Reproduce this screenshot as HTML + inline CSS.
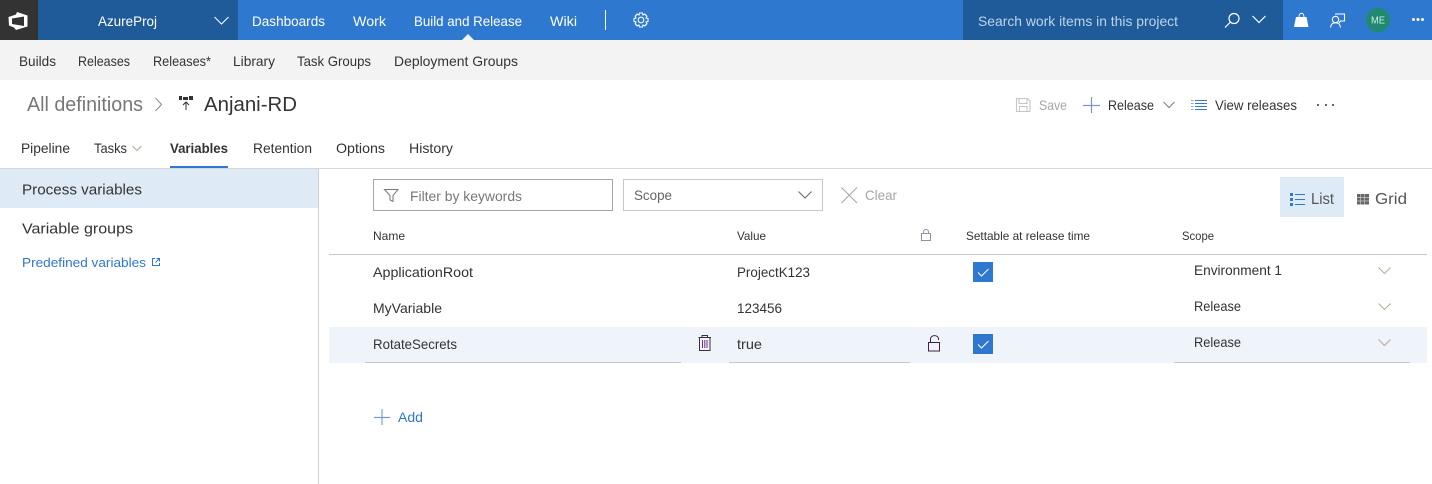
<!DOCTYPE html>
<html lang="en">
<head>
<meta charset="utf-8">
<title>Anjani-RD</title>
<style>
html,body{margin:0;padding:0;width:1432px;height:484px;overflow:hidden;background:#fff}
svg{display:block}
text{font-family:"Liberation Sans",sans-serif;font-size:14px;fill:#333}
.n text{fill:#fff}
.c{fill:none;stroke-width:1}
</style>
</head>
<body>
<svg xmlns="http://www.w3.org/2000/svg" width="1432" height="484" viewBox="0 0 1432 484">
<!-- top nav -->
<rect x="0" y="0" width="1432" height="40" fill="#2e78cf"/>
<rect x="0" y="0" width="38" height="40" fill="#333"/>
<rect x="38" y="0" width="200" height="40" fill="#205b99"/>
<rect x="963" y="0" width="320" height="40" fill="#205b99"/>
<path d="M8.500 17 L16 14.500 L17 12 L27.500 15.500 V26.500 L16 30 L14 27.500 L9 25.500 Z M12 18.500 V24 L24 26 V16.500 Z" fill="#fff" fill-rule="evenodd"/>
<g class="n">
<text x="98" y="26" textLength="59" lengthAdjust="spacingAndGlyphs">AzureProj</text>
<text x="252" y="26" textLength="73" lengthAdjust="spacingAndGlyphs">Dashboards</text>
<text x="353" y="26" textLength="33" lengthAdjust="spacingAndGlyphs">Work</text>
<text x="414" y="26" textLength="108" lengthAdjust="spacingAndGlyphs">Build and Release</text>
<text x="550" y="26" textLength="27" lengthAdjust="spacingAndGlyphs">Wiki</text>
</g>
<path d="M214.500 17 L221.500 24 L228.500 17" class="c" stroke="#fff" stroke-width="1.200"/>
<rect x="605" y="10" width="1" height="20" fill="#fff"/>
<g transform="translate(641 20)" fill="none" stroke="#fff">
<circle r="2.800" stroke-width="1.100"/>
<path d="M-1.500 -7 H1.500 L2 -5 L3.800 -5.900 L5.900 -3.800 L5 -2 L7 -1.500 V1.500 L5 2 L5.900 3.800 L3.800 5.900 L2 5 L1.500 7 H-1.500 L-2 5 L-3.800 5.900 L-5.900 3.800 L-5 2 L-7 1.500 V-1.500 L-5 -2 L-5.900 -3.800 L-3.800 -5.900 L-2 -5 Z" stroke-width="1.100"/>
</g>
<text x="978" y="26" textLength="200" lengthAdjust="spacingAndGlyphs" style="fill:#bcd4ec">Search work items in this project</text>
<g fill="none" stroke="#fff" stroke-width="1.200">
<circle cx="1234" cy="18.500" r="5"/>
<path d="M1230.500 22 L1225 27.500"/>
<path d="M1252.500 16 L1259 22.500 L1265.500 16"/>
</g>
<path d="M1296 17 H1306.500 L1308.500 27 H1294 Z" fill="#fff"/>
<path d="M1299 17 C1299 12 1304 12 1304 17" fill="none" stroke="#fff" stroke-width="1"/>
<g fill="none" stroke="#fff" stroke-width="1.100">
<path d="M1335 14 H1344.500 V21 H1340.500 L1339 23"/>
<circle cx="1335.500" cy="19.500" r="3.200"/>
<path d="M1330.500 27.500 C1331 23.500 1333 22.800 1335.500 22.800 C1338 22.800 1340 23.500 1340.500 27.500"/>
</g>
<circle cx="1378" cy="20" r="12" fill="#1f8a70"/>
<text x="1371" y="23.500" textLength="14" lengthAdjust="spacingAndGlyphs" style="font-size:10px;fill:#cfeee6">ME</text>
<g fill="#fff"><circle cx="1413.500" cy="19.500" r="1.500"/><circle cx="1418" cy="19.500" r="1.500"/><circle cx="1422.500" cy="19.500" r="1.500"/></g>

<!-- sub nav -->
<rect x="0" y="40" width="1432" height="40" fill="#f3f3f3"/>
<path d="M462 40 L468 34 L474 40 Z" fill="#f3f3f3"/>
<text x="19" y="66" textLength="37" lengthAdjust="spacingAndGlyphs">Builds</text>
<text x="78" y="66" textLength="52" lengthAdjust="spacingAndGlyphs">Releases</text>
<text x="153" y="66" textLength="58" lengthAdjust="spacingAndGlyphs">Releases*</text>
<text x="233" y="66" textLength="42" lengthAdjust="spacingAndGlyphs">Library</text>
<text x="297" y="66" textLength="74" lengthAdjust="spacingAndGlyphs">Task Groups</text>
<text x="394" y="66" textLength="124" lengthAdjust="spacingAndGlyphs">Deployment Groups</text>

<!-- title -->
<text x="27" y="111" textLength="116" lengthAdjust="spacingAndGlyphs" style="font-size:20px;fill:#777">All definitions</text>
<path d="M155.500 98 L161.500 104.500 L155.500 111" class="c" stroke="#8a8a8a" stroke-width="1.100"/>
<g fill="#333"><rect x="179" y="96" width="3" height="4"/><rect x="183" y="97" width="5" height="3"/><rect x="189" y="96" width="4" height="4"/></g>
<path d="M186 110 V102.500 M183 105 L186 102 L189 105" class="c" stroke="#333"/>
<text x="204" y="111" textLength="93" lengthAdjust="spacingAndGlyphs" style="font-size:20px;fill:#333">Anjani-RD</text>

<!-- actions -->
<g fill="none" stroke="#c4c8c4" stroke-width="1.100">
<path d="M1016.500 98.500 H1027.500 L1030 101 V111.500 H1016.500 Z"/>
<path d="M1019 98.500 V103.500 H1027 V98.500 M1019.500 111.500 V106.500 H1027 V111.500"/>
</g>
<text x="1039" y="110" textLength="28" lengthAdjust="spacingAndGlyphs" style="fill:#a6a6a6">Save</text>
<path d="M1091.500 97 V113" stroke="#7a96cc" stroke-width="1.200"/>
<path d="M1083 105.500 H1100" stroke="#7a96cc" stroke-width="1.200"/>
<text x="1108" y="110" textLength="46" lengthAdjust="spacingAndGlyphs">Release</text>
<path d="M1163.500 102 L1169 107.500 L1174.500 102" class="c" stroke="#7d7d7d"/>
<g stroke="#2e78cf"><path d="M1195 100.500 H1207 M1195 103.500 H1207 M1195 106.500 H1207 M1195 109.500 H1207"/><path d="M1191 100.500 H1193.500 M1191 103.500 H1193.500 M1191 106.500 H1193.500 M1191 109.500 H1193.500" stroke="#7fa8de"/></g>
<text x="1215" y="110" textLength="82" lengthAdjust="spacingAndGlyphs">View releases</text>
<g fill="#333"><circle cx="1318" cy="105" r="1"/><circle cx="1326" cy="105" r="1"/><circle cx="1333" cy="105" r="1"/></g>

<!-- tabs -->
<text x="21" y="153" textLength="49" lengthAdjust="spacingAndGlyphs">Pipeline</text>
<text x="94" y="153" textLength="33" lengthAdjust="spacingAndGlyphs">Tasks</text>
<path d="M132.500 146 L137 150.500 L141.500 146" class="c" stroke="#b8a89a"/>
<text x="170" y="153" textLength="58" lengthAdjust="spacingAndGlyphs" style="font-weight:bold;font-size:13.500px">Variables</text>
<text x="253" y="153" textLength="59" lengthAdjust="spacingAndGlyphs">Retention</text>
<text x="336" y="153" textLength="49" lengthAdjust="spacingAndGlyphs">Options</text>
<text x="409" y="153" textLength="44" lengthAdjust="spacingAndGlyphs">History</text>
<rect x="0" y="168" width="1432" height="1" fill="#d8d8d8"/>
<rect x="170" y="166" width="58" height="2" fill="#2e78cf"/>

<!-- sidebar -->
<rect x="0" y="169" width="318" height="39" fill="#deeaf6"/>
<rect x="318" y="169" width="1" height="315" fill="#cfcfcf"/>
<text x="22" y="194.500" textLength="120" lengthAdjust="spacingAndGlyphs" style="font-size:15px">Process variables</text>
<text x="22" y="233.500" textLength="111" lengthAdjust="spacingAndGlyphs" style="font-size:15px">Variable groups</text>
<text x="22" y="267" textLength="124" lengthAdjust="spacingAndGlyphs" style="font-size:13px;fill:#2e78cf">Predefined variables</text>
<path d="M155 258.500 H152.500 V265.500 H159.500 V263 M156.500 258.500 H159.500 V261.500 M159.500 258.500 L155.500 262.500" class="c" stroke="#2e78cf"/>

<!-- filters -->
<rect x="373.500" y="179.500" width="239" height="31" fill="#fff" stroke="#a6a6a6"/>
<path d="M384.500 189.500 H398 L393 195.500 V201.500 L390 200 V195.500 Z" class="c" stroke="#777"/>
<text x="410" y="201" textLength="112" lengthAdjust="spacingAndGlyphs" style="fill:#777">Filter by keywords</text>
<rect x="623.500" y="179.500" width="199" height="31" fill="#fff" stroke="#c8c8c8"/>
<text x="634" y="200" textLength="38" lengthAdjust="spacingAndGlyphs" style="fill:#666">Scope</text>
<path d="M798.500 191.500 L805 198 L811.500 191.500" class="c" stroke="#666"/>
<path d="M841.500 187.500 L857 203 M857 187.500 L841.500 203" class="c" stroke="#a6a6a6" stroke-width="1.200"/>
<text x="865" y="200" textLength="32" lengthAdjust="spacingAndGlyphs" style="fill:#a6a6a6">Clear</text>
<rect x="1280" y="177" width="64" height="40" fill="#deeaf6"/>
<g fill="#2e78cf"><rect x="1290" y="193" width="3" height="3"/><rect x="1290" y="198" width="3" height="3"/><rect x="1290" y="203" width="3" height="3"/></g>
<path d="M1295 194.500 H1305 M1295 199.500 H1305 M1295 204.500 H1305" stroke="#2e78cf"/>
<text x="1311" y="204" textLength="23" lengthAdjust="spacingAndGlyphs" style="font-size:16px;fill:#555">List</text>
<rect x="1357" y="194" width="12" height="10.500" fill="#666"/>
<path d="M1360.500 194 V204.500 M1364.500 194 V204.500 M1357 197.500 H1369 M1357 201 H1369" stroke="#c8c8c8" stroke-width="0.700"/>
<text x="1375" y="204" textLength="32" lengthAdjust="spacingAndGlyphs" style="font-size:16px;fill:#555">Grid</text>

<!-- table header -->
<text x="373" y="240" textLength="32" lengthAdjust="spacingAndGlyphs" style="font-size:12px">Name</text>
<text x="737" y="240" textLength="29" lengthAdjust="spacingAndGlyphs" style="font-size:12px">Value</text>
<g class="c" stroke="#8a94a6"><rect x="921.500" y="233.500" width="9" height="7"/><path d="M923.500 233.500 V232 C923.500 228.500 928.500 228.500 928.500 232 V233.500"/></g>
<text x="966" y="240" textLength="124" lengthAdjust="spacingAndGlyphs" style="font-size:12px">Settable at release time</text>
<text x="1182" y="240" textLength="32" lengthAdjust="spacingAndGlyphs" style="font-size:12px">Scope</text>
<rect x="329" y="254" width="1098" height="1" fill="#c8c8c8"/>

<!-- rows -->
<rect x="329" y="327" width="1098" height="36" fill="#eff4fb"/>
<rect x="365" y="362" width="316" height="1" fill="#c8c8c8"/>
<rect x="729" y="362" width="181" height="1" fill="#c8c8c8"/>
<rect x="1174" y="362" width="236" height="1" fill="#c8c8c8"/>

<text x="373" y="277" textLength="100" lengthAdjust="spacingAndGlyphs">ApplicationRoot</text>
<text x="737" y="277" textLength="73" lengthAdjust="spacingAndGlyphs">ProjectK123</text>
<rect x="973" y="262" width="20" height="20" fill="#2e78cf"/>
<path d="M978 272.500 L981.500 276 L988.500 269" class="c" stroke="#fff" stroke-width="1.200"/>
<text x="1194" y="275" textLength="88" lengthAdjust="spacingAndGlyphs">Environment 1</text>
<path d="M1378.500 267.500 L1384.500 273.500 L1390.500 267.500" class="c" stroke="#b8a89a"/>

<text x="373" y="313" textLength="69" lengthAdjust="spacingAndGlyphs">MyVariable</text>
<text x="737" y="313" textLength="45" lengthAdjust="spacingAndGlyphs">123456</text>
<text x="1194" y="311" textLength="47" lengthAdjust="spacingAndGlyphs">Release</text>
<path d="M1378.500 303.500 L1384.500 309.500 L1390.500 303.500" class="c" stroke="#b8a89a"/>

<text x="373" y="349" textLength="84" lengthAdjust="spacingAndGlyphs">RotateSecrets</text>
<g class="c" stroke="#333">
<path d="M698.500 337.500 H711 M702 337.500 V335.500 H707.500 V337.500 M699.500 337.500 V350.500 H710 V337.500"/>
</g>
<path d="M702.500 340 V348 M704.800 340 V348 M707 340 V348" class="c" stroke="#7a2a8c"/>
<text x="737" y="349" textLength="25" lengthAdjust="spacingAndGlyphs">true</text>
<g class="c" stroke="#4a1a4a"><rect x="928.500" y="342.500" width="11" height="8.500"/><path d="M930.500 342.500 V339 C930.500 334.500 938.500 334.500 938.500 339 V340"/></g>
<rect x="973" y="334" width="20" height="20" fill="#2e78cf"/>
<path d="M978 344.500 L981.500 348 L988.500 341" class="c" stroke="#fff" stroke-width="1.200"/>
<text x="1194" y="347" textLength="47" lengthAdjust="spacingAndGlyphs">Release</text>
<path d="M1378.500 339.500 L1384.500 345.500 L1390.500 339.500" class="c" stroke="#b8a89a"/>

<!-- add -->
<path d="M382 409 V425" stroke="#6fa8e0" stroke-width="1.200"/>
<path d="M374 417.500 H390" stroke="#7a96cc" stroke-width="1.200"/>
<text x="398" y="422" textLength="25" lengthAdjust="spacingAndGlyphs" style="fill:#2e78cf">Add</text>
</svg>
</body>
</html>
